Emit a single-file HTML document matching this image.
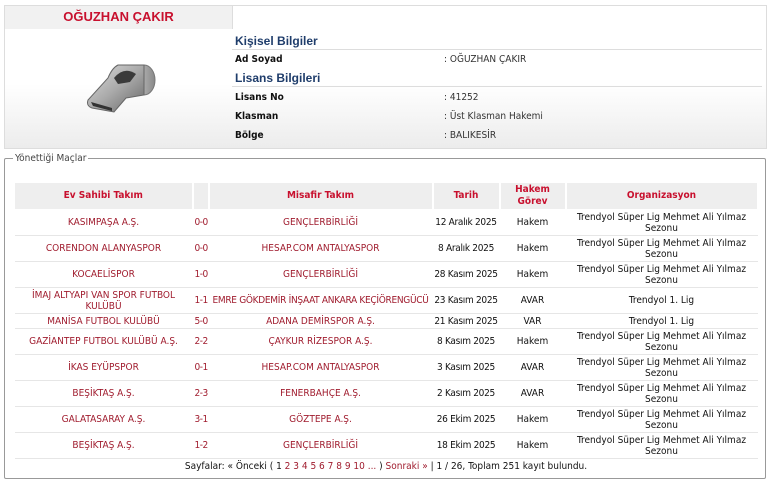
<!DOCTYPE html><html><head><meta charset="utf-8"><style>
*{margin:0;padding:0;box-sizing:border-box}
body{width:772px;height:483px;background:#fff;font-family:"DejaVu Sans Condensed","Liberation Sans",sans-serif;font-size:10px;color:#111;position:relative;overflow:hidden}
.abs{position:absolute}
.top{left:4px;top:5px;width:763px;height:144px;border:1px solid #ddd;background:linear-gradient(#fff 55%,#ececec)}
.tab{left:4px;top:5px;width:229px;height:24px;background:#f1f1f1;border:1px solid #ddd;border-bottom:none}
.name{left:4px;top:9px;width:229px;text-align:center;color:#c8102e;font:bold 13px "Liberation Sans",sans-serif}
.h{font:bold 12px "Liberation Sans",sans-serif;color:#1f3d6b;left:235px}
.line{left:232px;width:530px;height:1px;background:#ddd}
.lab{left:235px;font-weight:bold;font-size:10px}
.val{left:444px;font-size:10px;color:#333}
fieldset{position:absolute;left:4px;top:153px;width:762px;height:326px;border:1px solid #999;border-radius:2px}
legend{font-size:10px;color:#444;margin-left:8px;padding:0 2px}
table{position:absolute;left:14px;top:182px;border-collapse:collapse;table-layout:fixed;width:743px}
th{background:#eee;color:#c8102e;font-weight:bold;height:27px;border:1px solid #fff;border-right:2px solid #fff;font-size:10px;line-height:12px}
td{text-align:center;color:#a01c2e;border-bottom:1px solid #e6e6e6;height:26px;line-height:11px;font-size:10px;overflow:visible}
td.s{text-align:left;padding-left:2px;white-space:nowrap;letter-spacing:-.5px}
td.d{white-space:nowrap;letter-spacing:-.3px}
td.d,td.g,td.o{color:#111}
tr.sh td{height:15px}
td.p{color:#111;height:16px;border:none}
td.p a{color:#a01c2e;text-decoration:none}
</style></head><body>
<div class="abs top"></div>
<div class="abs tab"></div>
<div class="abs name">OĞUZHAN ÇAKIR</div>
<svg class="abs" style="left:82px;top:60px" width="78" height="58" viewBox="0 0 78 58">
<defs><linearGradient id="g" x1="0" y1="0" x2="1" y2="1"><stop offset="0" stop-color="#ddd"/><stop offset=".5" stop-color="#aaa"/><stop offset="1" stop-color="#666"/></linearGradient>
<linearGradient id="c" x1="0" y1="0" x2="1" y2="0"><stop offset="0" stop-color="#ccc"/><stop offset="1" stop-color="#888"/></linearGradient></defs>
<ellipse cx="62" cy="20" rx="11" ry="15" fill="url(#c)" stroke="#777"/>
<path d="M36 5 L62 5 L62 35 L44 38 L32 52 L10 48 Q4 46 6 40 L26 18 Q30 8 36 5 Z" fill="url(#g)" stroke="#666"/>
<path d="M32 18 Q42 6 54 14 L48 22 L36 24 Z" fill="#3a3a3a"/>
<path d="M9 42 L30 48 L30 51 L11 46 Z" fill="#333"/>
</svg>
<div class="abs h" style="top:34px">Kişisel Bilgiler</div>
<div class="abs line" style="top:49px"></div>
<div class="abs lab" style="top:54px">Ad Soyad</div><div class="abs val" style="top:54px">: OĞUZHAN ÇAKIR</div>
<div class="abs h" style="top:71px">Lisans Bilgileri</div>
<div class="abs line" style="top:86px"></div>
<div class="abs lab" style="top:92px">Lisans No</div><div class="abs val" style="top:92px">: 41252</div>
<div class="abs lab" style="top:111px">Klasman</div><div class="abs val" style="top:111px">: Üst Klasman Hakemi</div>
<div class="abs lab" style="top:130px">Bölge</div><div class="abs val" style="top:130px">: BALIKESİR</div>
<fieldset><legend>Yönettiği Maçlar</legend></fieldset>
<table>
<colgroup><col style="width:178px"><col style="width:16px"><col style="width:224px"><col style="width:67px"><col style="width:66px"><col style="width:192px"></colgroup>
<tr><th>Ev Sahibi Takım</th><th></th><th>Misafir Takım</th><th>Tarih</th><th>Hakem<br>Görev</th><th>Organizasyon</th></tr>
<tr><td>KASIMPAŞA A.Ş.</td><td class="s">0-0</td><td>GENÇLERBİRLİĞİ</td><td class="d">12 Aralık 2025</td><td class="g">Hakem</td><td class="o">Trendyol Süper Lig Mehmet Ali Yılmaz Sezonu</td></tr>
<tr><td>CORENDON ALANYASPOR</td><td class="s">0-0</td><td>HESAP.COM ANTALYASPOR</td><td class="d">8 Aralık 2025</td><td class="g">Hakem</td><td class="o">Trendyol Süper Lig Mehmet Ali Yılmaz Sezonu</td></tr>
<tr><td>KOCAELİSPOR</td><td class="s">1-0</td><td>GENÇLERBİRLİĞİ</td><td class="d">28 Kasım 2025</td><td class="g">Hakem</td><td class="o">Trendyol Süper Lig Mehmet Ali Yılmaz Sezonu</td></tr>
<tr><td>İMAJ ALTYAPI VAN SPOR FUTBOL KULÜBÜ</td><td class="s">1-1</td><td style="white-space:nowrap;letter-spacing:-.3px">EMRE GÖKDEMİR İNŞAAT ANKARA KEÇİÖRENGÜCÜ</td><td class="d">23 Kasım 2025</td><td class="g">AVAR</td><td class="o">Trendyol 1. Lig</td></tr>
<tr class="sh"><td>MANİSA FUTBOL KULÜBÜ</td><td class="s">5-0</td><td>ADANA DEMİRSPOR A.Ş.</td><td class="d">21 Kasım 2025</td><td class="g">VAR</td><td class="o">Trendyol 1. Lig</td></tr>
<tr><td>GAZİANTEP FUTBOL KULÜBÜ A.Ş.</td><td class="s">2-2</td><td>ÇAYKUR RİZESPOR A.Ş.</td><td class="d">8 Kasım 2025</td><td class="g">Hakem</td><td class="o">Trendyol Süper Lig Mehmet Ali Yılmaz Sezonu</td></tr>
<tr><td>İKAS EYÜPSPOR</td><td class="s">0-1</td><td>HESAP.COM ANTALYASPOR</td><td class="d">3 Kasım 2025</td><td class="g">AVAR</td><td class="o">Trendyol Süper Lig Mehmet Ali Yılmaz Sezonu</td></tr>
<tr><td>BEŞİKTAŞ A.Ş.</td><td class="s">2-3</td><td>FENERBAHÇE A.Ş.</td><td class="d">2 Kasım 2025</td><td class="g">AVAR</td><td class="o">Trendyol Süper Lig Mehmet Ali Yılmaz Sezonu</td></tr>
<tr><td>GALATASARAY A.Ş.</td><td class="s">3-1</td><td>GÖZTEPE A.Ş.</td><td class="d">26 Ekim 2025</td><td class="g">Hakem</td><td class="o">Trendyol Süper Lig Mehmet Ali Yılmaz Sezonu</td></tr>
<tr><td>BEŞİKTAŞ A.Ş.</td><td class="s">1-2</td><td>GENÇLERBİRLİĞİ</td><td class="d">18 Ekim 2025</td><td class="g">Hakem</td><td class="o">Trendyol Süper Lig Mehmet Ali Yılmaz Sezonu</td></tr>
<tr><td colspan="6" class="p">Sayfalar: « Önceki ( 1 <a>2</a> <a>3</a> <a>4</a> <a>5</a> <a>6</a> <a>7</a> <a>8</a> <a>9</a> <a>10</a> <a>...</a> ) <a>Sonraki »</a> | 1 / 26, Toplam 251 kayıt bulundu.</td></tr>
</table>
</body></html>
